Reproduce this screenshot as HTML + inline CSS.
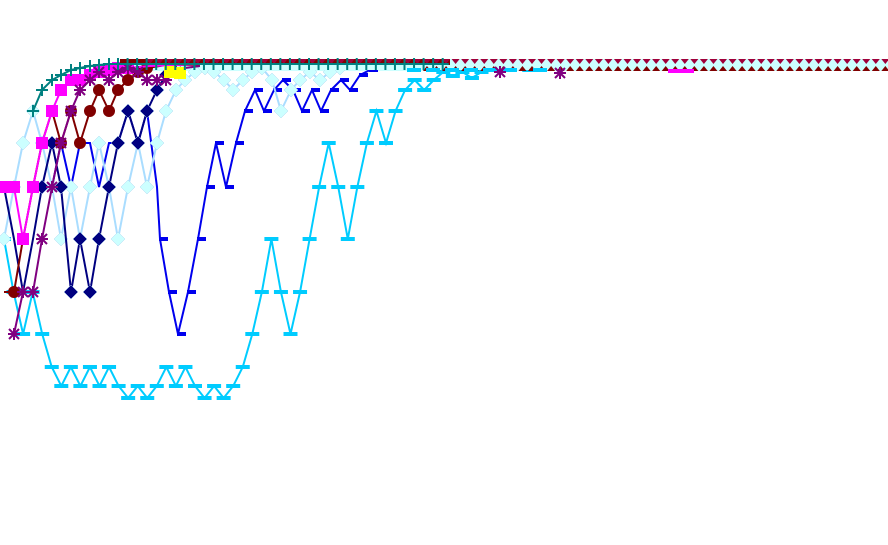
<!DOCTYPE html>
<html><head><meta charset="utf-8"><style>html,body{margin:0;padding:0;background:#fff;width:888px;height:545px;overflow:hidden}svg{display:block}</style></head>
<body>
<svg id="s" width="888" height="545" xmlns="http://www.w3.org/2000/svg">
</svg>
<script>
var S=document.getElementById('s'),NS='http://www.w3.org/2000/svg';
function el(t,a){var e=document.createElementNS(NS,t);for(var k in a)e.setAttribute(k,a[k]);S.appendChild(e);return e;}
function line(pts,c,w){el('polyline',{points:pts.map(p=>p.join(',')).join(' '),fill:'none',stroke:c,'stroke-width':w||2});}
function mk(pts,type,c){pts.forEach(function(p){var x=p[0],y=p[1];
if(type=='bar')el('rect',{x:x-7,y:y-2,width:14,height:4,fill:c});
else if(type=='dia')el('polygon',{points:(x)+','+(y-7)+' '+(x+7)+','+y+' '+x+','+(y+7)+' '+(x-7)+','+y,fill:c,stroke:'#b0d8f0','stroke-width':0.5});
else if(type=='circ')el('circle',{cx:x,cy:y,r:6,fill:c});
else if(type=='sq')el('rect',{x:x-6,y:y-6,width:12,height:12,fill:c});
else if(type=='plus'){el('line',{x1:x-6,y1:y,x2:x+6,y2:y,stroke:c,'stroke-width':2});el('line',{x1:x,y1:y-6,x2:x,y2:y+6,stroke:c,'stroke-width':2});}
else if(type=='ast'){[[-6,0,6,0],[-5,-5,5,5],[-5,5,5,-5],[0,-6,0,6]].forEach(function(d){el('line',{x1:x+d[0],y1:y+d[1],x2:x+d[2],y2:y+d[3],stroke:c,'stroke-width':2});});}
else if(type=='blu'){el('rect',{x:x-1,y:y-2,width:9,height:4,fill:c});}
});}
function X(i){return 4+i*9.55;}
function ser(ys){return ys.map(function(y,i){return [X(i),y];});}
// background band
el('rect',{x:120,y:59,width:768,height:12,fill:'#ccffff'});
var cy=[239,292,334,292,334,367,386,367,386,367,386,367,386,398,386,398,386,367,386,367,386,398,386,398,386,367,334,292,239,292,334,292,239,187,143,187,239,187,143,111,143,111,90,80,90,80,72,76,72,78,72,70,70,68,68,70,68,68,66,66,65,65];
while(cy.length<93)cy.push(65);
var CY=ser(cy);line(CY,'#00ccff',2);mk(CY.slice(0,62),'bar','#00ccff');
var bpts=[[52,187],[61,143],[71,187],[80,143],[90,143],[99,187],[109,143],[118,143],[128,111],[138,143],[147,111],[157,187],[160,239],[169,292],[178,334],[188,292],[198,239],[207,187],[216,143],[226,187],[236,143],[245,111],[255,90],[264,111],[274,90],[283,80],[293,90],[302,111],[312,90],[321,111],[331,90],[341,80],[350,90],[360,75],[370,70],[380,68],[400,66],[888,64]];
line(bpts,'#0000ee',2);mk(bpts.slice(12,36),'blu','#0000ee');
var lc=[[4,239],[14,187],[23,143],[33,111],[42,143],[52,187],[61,239],[71,187],[80,239],[90,187],[99,143],[109,187],[118,239],[128,187],[138,143],[147,187],[157,143],[166,111],[176,90],[185,80],[195,72],[205,68],[214,72],[224,80],[233,90],[243,80],[252,72],[262,68],[272,80],[281,111],[291,90],[300,80],[310,72],[320,80],[330,72],[340,68],[360,66],[888,66]];
line(lc,'#aaddff',2);mk(lc.slice(0,36),'dia','#ccffff');
var nv=[[4,187],[14,239],[23,292],[33,239],[42,187],[52,143],[61,187],[71,292],[80,239],[90,292],[99,239],[109,187],[118,143],[128,111],[138,143],[147,111],[157,90],[166,75]];
line(nv,'#000080',2);mk(nv.slice(4),'dia','#000080');
var mr=[[4,292],[14,292],[23,239],[33,187],[42,143],[52,111],[61,143],[71,111],[80,143],[90,111],[99,90],[109,111],[118,90],[128,80],[138,72],[147,68],[166,65],[888,62]];
line(mr,'#800000',2);mk(mr.slice(1,16),'circ','#800000');
var mg=[[4,187],[14,187],[23,239],[33,187],[42,143],[52,111],[61,90],[71,80],[80,80],[90,75],[99,72],[109,70],[118,68],[128,68],[150,66],[200,64]];
line(mg,'#ff00ff',2);mk(mg.slice(0,14),'sq','#ff00ff');
var pu=[[14,334],[23,292],[33,292],[42,239],[52,187],[61,143],[71,111],[80,90],[90,80],[99,72],[109,80],[118,72],[128,68],[138,72],[147,80],[157,80],[166,80],[176,72],[185,68],[200,66]];
line(pu,'#800080',2);mk(pu.slice(0,18),'ast','#800080');
mk([[170,72],[180,73]],'sq','#ffff00');
// band on top for right part
el('rect',{x:200,y:59,width:688,height:11,fill:'#ccffff'});
el('rect',{x:120,y:59,width:330,height:6,fill:'#800000'});
for(var x=150;x<888;x+=9.55){
 el('polygon',{points:(x-4)+',59 '+(x+4)+',59 '+x+',64',fill:'#a0003a'});
 if(x>420) el('polygon',{points:(x-4)+',71 '+(x+4)+',71 '+x+',66',fill:'#800000'});
}
var tl=[[33,111],[42,90],[52,80],[61,75],[71,70],[80,68],[90,66],[99,65],[109,64]];
for(var x=118;x<445;x+=9.55)tl.push([x,64]);
line(tl,'#008080',2);mk(tl,'plus','#008080');
// cyan markers on band bottom
[414,433,452,471,490,510,540].forEach(function(x){el('rect',{x:x-7,y:68,width:14,height:4,fill:'#00ccff'});});
el('rect',{x:668,y:69,width:26,height:4,fill:'#ff00ff'});
mk([[500,72],[560,73]],'ast','#800080');
</script>
</body></html>
